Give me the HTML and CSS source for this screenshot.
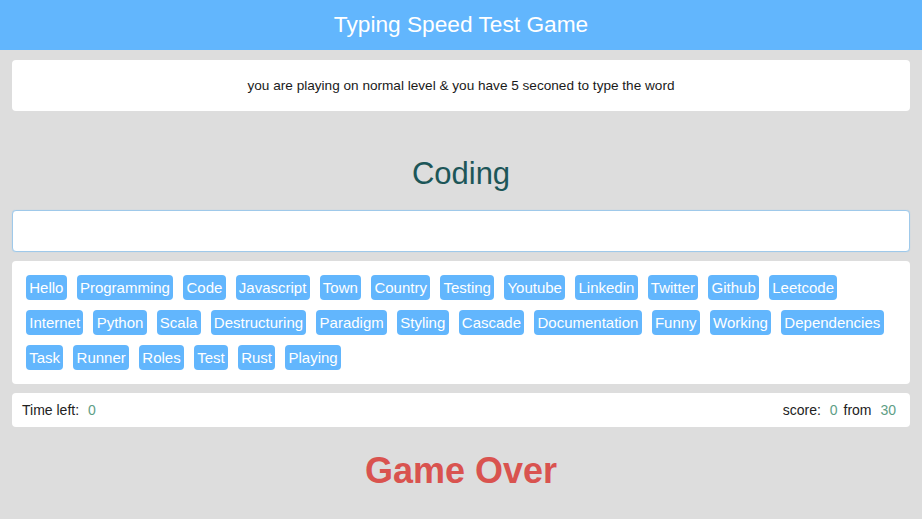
FILE: index.html
```html
<!DOCTYPE html>
<html lang="en">
<head>
<meta charset="utf-8">
<title>Typing Speed Test Game</title>
<link rel="stylesheet" href="styles.css">
</head>
<body>
<header class="top-bar">Typing Speed Test Game</header>
<main class="game">
  <div class="message">you are playing on normal level &amp; you have 5 seconed to type the word</div>
  <h2 class="the-word">Coding</h2>
  <input class="input" type="text" aria-label="type the word">
  <div class="upcoming-words">
    <span class="chip">Hello</span>
    <span class="chip">Programming</span>
    <span class="chip">Code</span>
    <span class="chip">Javascript</span>
    <span class="chip">Town</span>
    <span class="chip">Country</span>
    <span class="chip">Testing</span>
    <span class="chip">Youtube</span>
    <span class="chip">Linkedin</span>
    <span class="chip">Twitter</span>
    <span class="chip">Github</span>
    <span class="chip">Leetcode</span>
    <span class="chip">Internet</span>
    <span class="chip">Python</span>
    <span class="chip">Scala</span>
    <span class="chip">Destructuring</span>
    <span class="chip">Paradigm</span>
    <span class="chip">Styling</span>
    <span class="chip">Cascade</span>
    <span class="chip">Documentation</span>
    <span class="chip">Funny</span>
    <span class="chip">Working</span>
    <span class="chip">Dependencies</span>
    <span class="chip">Task</span>
    <span class="chip">Runner</span>
    <span class="chip">Roles</span>
    <span class="chip">Test</span>
    <span class="chip">Rust</span>
    <span class="chip">Playing</span>
  </div>
  <div class="control">
    <div class="time">Time left: <span class="num">0</span></div>
    <div class="score">score: <span class="num">0</span> from <span class="num">30</span></div>
  </div>
  <div class="finish">Game Over</div>
</main>
</body>
</html>
```
FILE: styles.css
```css
* { box-sizing: border-box; }
html, body { margin: 0; padding: 0; }
body {
  background: #dddddd;
  font-family: "Liberation Sans", Arial, sans-serif;
  color: #222;
}
.top-bar {
  background: #62b6fd;
  color: #fff;
  height: 50px;
  padding-bottom: 2px;
  display: flex;
  align-items: center;
  justify-content: center;
  font-size: 22.7px;
}
.game {
  padding: 10px 12px 0;
  display: flex;
  flex-direction: column;
}
.message {
  background: #fff;
  border-radius: 4px;
  height: 51px;
  display: flex;
  align-items: center;
  justify-content: center;
  font-size: 13.6px;
  color: #1a1a1a;
}
.the-word {
  margin: 45px 0 18px;
  text-align: center;
  font-weight: normal;
  font-size: 31px;
  line-height: 36px;
  color: #1c5658;
}
.input {
  display: block;
  width: 100%;
  height: 42px;
  border: 1px solid #9fc9ea;
  border-radius: 4px;
  background: #fff;
  margin: 0;
  font-size: 16px;
  box-shadow: 0 0 1px rgba(98,182,253,0.4);
}
.upcoming-words {
  margin-top: 9px;
  background: #fff;
  border-radius: 4px;
  padding: 14px;
  display: flex;
  flex-wrap: wrap;
  gap: 10px 10px;
}
.chip {
  background: #62b6fd;
  color: #fff;
  font-size: 15px;
  line-height: 17px;
  padding: 4px 3.25px;
  border-radius: 4px;
}
.control {
  margin-top: 9px;
  background: #fff;
  border-radius: 4px;
  height: 34px;
  padding: 0 14px 0 10px;
  display: flex;
  align-items: center;
  justify-content: space-between;
  font-size: 14px;
}
.num {
  color: #5e9e86;
  margin: 0 2px 0 5px;
}
.score .num:last-child { margin-right: 0; }
.finish {
  margin-top: 23px;
  text-align: center;
  font-weight: bold;
  font-size: 36px;
  line-height: 41px;
  color: #d9534f;
}
```
